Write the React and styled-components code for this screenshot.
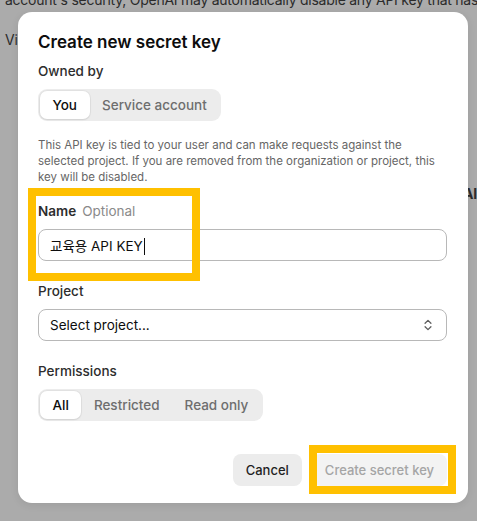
import React from "react";
import styled, { createGlobalStyle } from "styled-components";

const Global = createGlobalStyle`
  html, body { margin: 0; padding: 0; }
  body {
    width: 477px;
    height: 521px;
    overflow: hidden;
    background: #ababab;
    font-family: Inter, "Noto Sans", "Noto Sans CJK KR", sans-serif;
  }
`;

const Page = styled.div`
  position: relative;
  width: 477px;
  height: 521px;
  overflow: hidden;
  color: #2b2b2b;
  font-size: 14px;
  letter-spacing: -0.25px;
`;

const BackLine = styled.p`
  margin: 0;
  white-space: nowrap;
  line-height: 20px;
  padding-left: ${(p) => p.$indent || 0}px;
  margin-top: ${(p) => p.$top || 0}px;
  font-weight: ${(p) => (p.$bold ? 700 : 400)};
`;

const BackText = styled.div`
  padding: 0 0 0 5px;
  margin-top: -10px;
`;

const Modal = styled.div`
  position: absolute;
  left: 18px;
  top: 12px;
  width: 450px;
  box-sizing: border-box;
  background: #ffffff;
  border-radius: 14px;
  padding: 18px 21px 17px 20px;
  display: flex;
  flex-direction: column;
  color: #0d0d0d;
  letter-spacing: 0;
  box-shadow: 0 2px 8px rgba(0, 0, 0, 0.08);
`;

const Title = styled.h2`
  margin: 0;
  font-size: 17px;
  line-height: 24px;
  font-weight: 600;
`;

const Label = styled.div`
  font-size: 13.5px;
  line-height: 20px;
  font-weight: ${(p) => (p.$bold ? 600 : 500)};
  color: #2d2d2d;
  margin-top: ${(p) => p.$top}px;
  display: flex;
  gap: 6px;
`;

const Muted = styled.span`
  font-weight: 400;
  color: #8a8a8a;
`;

const Segmented = styled.div`
  display: inline-flex;
  align-self: flex-start;
  background: #ececec;
  border-radius: 9px;
  padding: 2px;
  margin-top: 8px;
`;

const Segment = styled.div`
  height: 28px;
  display: flex;
  align-items: center;
  padding: 0 12.5px;
  font-size: 13.5px;
  font-weight: 500;
  border-radius: 7px;
  color: ${(p) => (p.$active ? "#0d0d0d" : "#6e6e6e")};
  background: ${(p) => (p.$active ? "#ffffff" : "transparent")};
  box-shadow: ${(p) => (p.$active ? "0 0 0 1px rgba(0,0,0,0.04), 0 1px 2px rgba(0,0,0,0.08)" : "none")};
`;

const Description = styled.p`
  margin: 16px 0 0;
  font-size: 11.5px;
  line-height: 16px;
  color: #666666;
`;

const Field = styled.div`
  margin-top: 8px;
  height: 32px;
  box-sizing: border-box;
  border: 1px solid #b8b8b8;
  border-radius: 8px;
  display: flex;
  align-items: center;
  justify-content: space-between;
  padding: 0 11px;
  font-size: 13.5px;
  color: #0d0d0d;
`;

const Caret = styled.span`
  display: inline-block;
  width: 1px;
  height: 17px;
  background: #0d0d0d;
  vertical-align: middle;
  margin-left: 1px;
`;

const Footer = styled.div`
  display: flex;
  justify-content: flex-end;
  gap: 10px;
  margin-top: 33px;
`;

const Button = styled.button`
  height: 32px;
  border: none;
  border-radius: 8px;
  padding: 0 13px;
  font-family: inherit;
  font-size: 13px;
  font-weight: 500;
  background: ${(p) => (p.$primary ? "#f3f3f3" : "#ececec")};
  color: ${(p) => (p.$primary ? "#a5a5a5" : "#1f1f1f")};
`;

const Highlight = styled.div`
  position: absolute;
  left: ${(p) => p.$x}px;
  top: ${(p) => p.$y}px;
  width: ${(p) => p.$w}px;
  height: ${(p) => p.$h}px;
  box-sizing: border-box;
  border: 8px solid #ffc000;
  pointer-events: none;
`;

const Chevrons = () => (
  <svg width="14" height="14" viewBox="0 0 24 24" fill="none" stroke="#5d5d5d" strokeWidth="2.2" strokeLinecap="round" strokeLinejoin="round">
    <path d="m7 15 5 5 5-5" />
    <path d="m7 9 5-5 5 5" />
  </svg>
);

export default function App() {
  return (
    <>
      <Global />
      <Page>
        <BackText>
          <BackLine>account's security, OpenAI may automatically disable any API key that has leaked publicly.</BackLine>
          <BackLine $top={20}>Vi</BackLine>
          <BackLine $top={134} $indent={458} $bold>AI</BackLine>
        </BackText>
        <Modal>
          <Title>Create new secret key</Title>
          <Label $top={7}>Owned by</Label>
          <Segmented>
            <Segment $active>You</Segment>
            <Segment>Service account</Segment>
          </Segmented>
          <Description>
            This API key is tied to your user and can make requests against the selected project. If you are removed from the organization or project, this key will be disabled.
          </Description>
          <Label $top={16} $bold>
            Name <Muted>Optional</Muted>
          </Label>
          <Field>
            <span>
              교육용 API KEY
              <Caret />
            </span>
          </Field>
          <Label $top={20}>Project</Label>
          <Field>
            <span>Select project...</span>
            <Chevrons />
          </Field>
          <Label $top={20}>Permissions</Label>
          <Segmented>
            <Segment $active>All</Segment>
            <Segment>Restricted</Segment>
            <Segment>Read only</Segment>
          </Segmented>
          <Footer>
            <Button>Cancel</Button>
            <Button $primary>Create secret key</Button>
          </Footer>
          <Highlight $x={10} $y={176} $w={172} $h={93} />
          <Highlight $x={291} $y={433} $w={147} $h={49} />
        </Modal>
      </Page>
    </>
  );
}
